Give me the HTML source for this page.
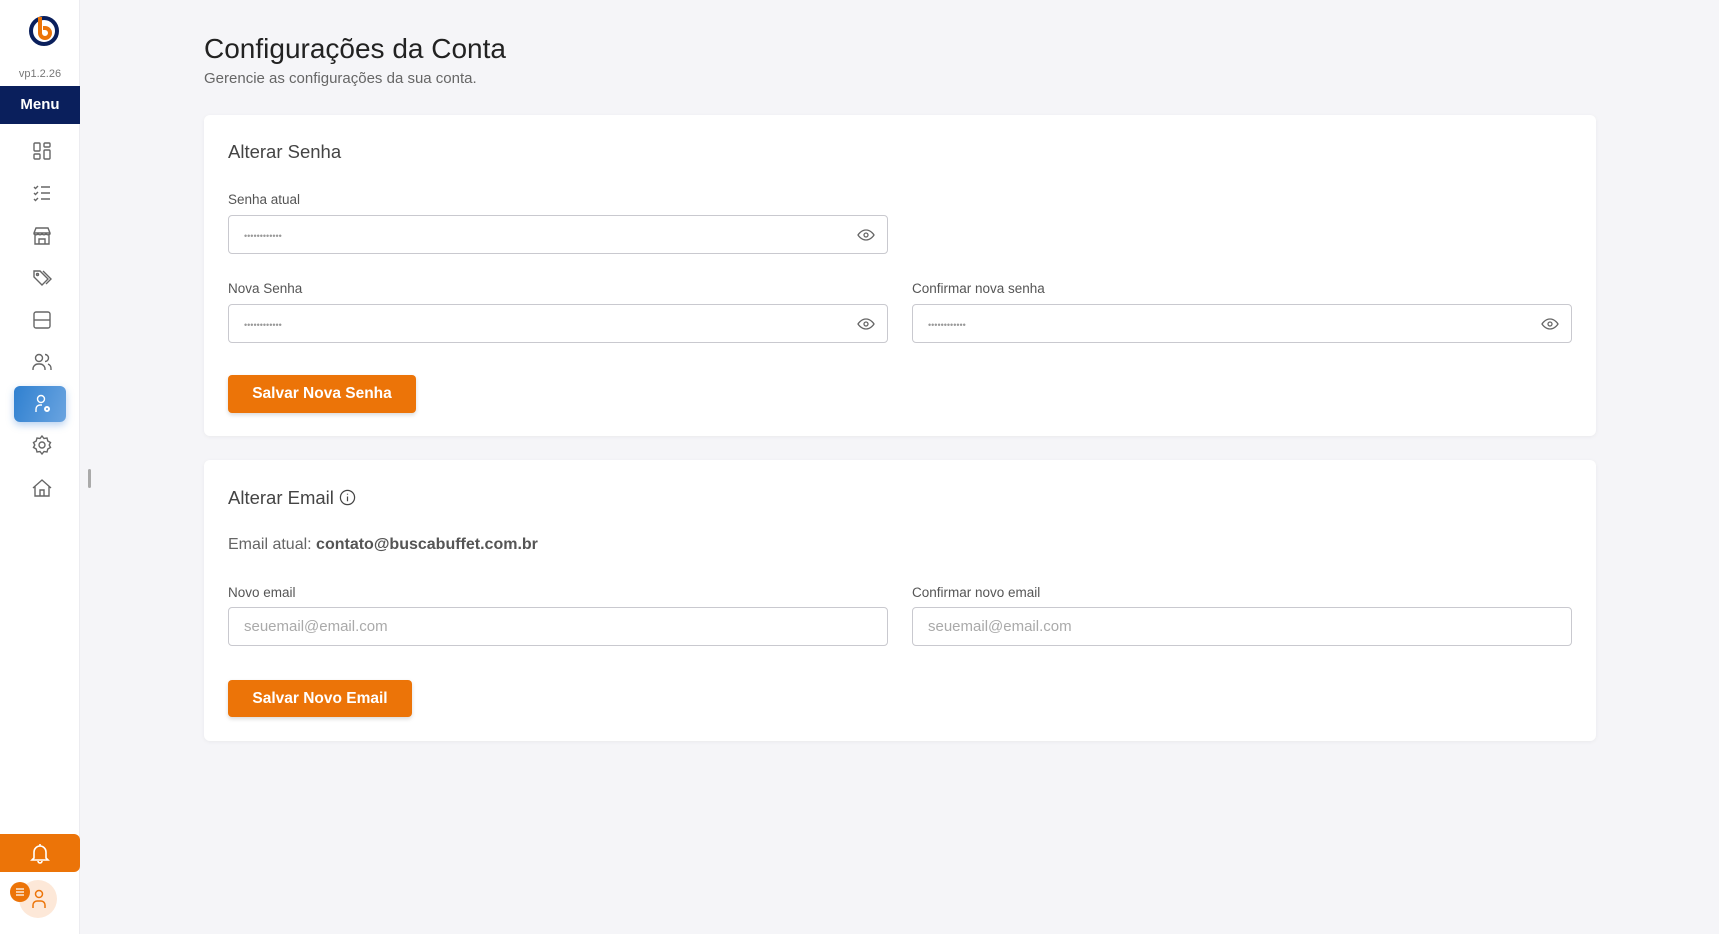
<!DOCTYPE html>
<html><head><meta charset="utf-8"><style>
*{box-sizing:border-box;margin:0;padding:0}
body{width:1719px;height:934px;background:#f5f5f8;font-family:"Liberation Sans",sans-serif;position:relative;overflow:hidden;color:#333}
.sb{position:absolute;left:0;top:0;width:80px;height:934px;background:#fff;border-right:1px solid #ececf0}
.ver{position:absolute;top:68px;width:80px;text-align:center;font-size:11px;color:#777}
.menu{position:absolute;top:86px;left:0;width:80px;height:38px;background:#0a1f5c;color:#fff;font-weight:bold;font-size:15px;text-align:center;line-height:38px}
.ic{position:absolute;left:30px;width:24px;height:24px}
.act{position:absolute;left:14px;top:386px;width:52px;height:36px;border-radius:6px;background:linear-gradient(110deg,#2f80d0,#6aa4e0);box-shadow:0 3px 8px rgba(50,120,210,.35)}
.abs{position:absolute}
.card{position:absolute;left:204px;width:1392px;background:#fff;border-radius:6px;box-shadow:0 1px 4px rgba(0,0,0,.05)}
.h{position:absolute;left:24px;font-size:18.5px;color:#444}
.lbl{position:absolute;font-size:13.5px;color:#555}
.in{position:absolute;height:39px;border:1px solid #c9c9cf;border-radius:4px;background:#fff;font-size:15px;color:#aaa;padding-left:15px;line-height:37px}
.btn{position:absolute;background:#ec7408;color:#fff;font-weight:bold;font-size:15.5px;border-radius:4px;text-align:center;box-shadow:0 2px 4px rgba(0,0,0,.15)}
.eye{position:absolute;right:12px;top:11px}
.dots{font-size:9px;letter-spacing:0;color:#999}
</style></head><body>
<div class="sb">
<svg class="abs" style="left:27px;top:13px" width="34" height="34" viewBox="0 0 34 34"><circle cx="17" cy="18" r="13" fill="none" stroke="#0a1f5c" stroke-width="4"/><path d="M13 4v16a5 5 0 1 0 5-5h-2" fill="none" stroke="#ec7408" stroke-width="4"/></svg>
<div class="ver">vp1.2.26</div>
<div class="menu">Menu</div>
<svg class="ic" style="top:139px" viewBox="0 0 24 24" fill="none" stroke="#666" stroke-width="1.4"><rect x="4" y="4" width="6" height="8" rx="1"/><rect x="14" y="4" width="6" height="4" rx="1"/><rect x="4" y="15" width="6" height="5" rx="1"/><rect x="14" y="11" width="6" height="9" rx="1"/></svg>
<svg class="ic" style="top:181px" viewBox="0 0 24 24" fill="none" stroke="#666" stroke-width="1.4"><path d="M4 6l1.5 1.5L8 5M4 12l1.5 1.5L8 11M4 18l1.5 1.5L8 17M11 6h9M11 12h9M11 18h9"/></svg>
<svg class="ic" style="top:224px" viewBox="0 0 24 24" fill="none" stroke="#666" stroke-width="1.4"><path d="M4 9l2-5h12l2 5v1a3 3 0 0 1-4 0 3 3 0 0 1-4 0 3 3 0 0 1-4 0 3 3 0 0 1-4 0zM5 11v9h14v-9M9 20v-5h6v5M4 9h16"/></svg>
<svg class="ic" style="top:266px" viewBox="0 0 24 24" fill="none" stroke="#666" stroke-width="1.4"><path d="M4 5h6l8 8-6 6-8-8zM13 5l8 8-5 5"/><circle cx="7.5" cy="8.5" r="1"/></svg>
<svg class="ic" style="top:308px" viewBox="0 0 24 24" fill="none" stroke="#666" stroke-width="1.4"><rect x="4" y="4" width="16" height="16" rx="2"/><path d="M4 12h16"/></svg>
<svg class="ic" style="top:350px" viewBox="0 0 24 24" fill="none" stroke="#666" stroke-width="1.4"><circle cx="9" cy="8" r="3.5"/><path d="M3 20v-1a5 5 0 0 1 5-5h2a5 5 0 0 1 5 5v1M15 4.5a3.5 3.5 0 0 1 0 7M18 14a5 5 0 0 1 3 5v1"/></svg>
<div class="act"></div>
<svg class="ic" style="top:392px" viewBox="0 0 24 24" fill="none" stroke="#fff" stroke-width="1.4"><circle cx="11" cy="7" r="3.5"/><path d="M6 20v-3a4 4 0 0 1 4-4h2"/><circle cx="17" cy="17" r="2" stroke-width="2"/></svg>
<svg class="ic" style="top:433px" viewBox="0 0 24 24" fill="none" stroke="#666" stroke-width="1.4"><circle cx="12" cy="12" r="3"/><path d="M12 3l2 2.5 3-.5.8 3 2.7 1.5-1.3 2.5 1.3 2.5-2.7 1.5-.8 3-3-.5L12 21l-2-2.5-3 .5-.8-3L3.5 14.5 4.8 12 3.5 9.5 6.2 8 7 5l3 .5z"/></svg>
<svg class="ic" style="top:476px" viewBox="0 0 24 24" fill="none" stroke="#666" stroke-width="1.4"><path d="M3 12l9-8 9 8M5 10v10h14V10M10 20v-6h4v6"/></svg>
<div class="abs" style="left:0;top:834px;width:80px;height:38px;background:#ec7408;border-radius:0 6px 6px 0"></div>
<svg class="abs" style="left:28px;top:841px" width="24" height="24" viewBox="0 0 24 24" fill="none" stroke="#fff" stroke-width="1.6"><path d="M6 17V11a6 6 0 0 1 12 0v6l2 2H4zM10 20a2 2 0 0 0 4 0M12 3v2"/></svg>
<div class="abs" style="left:19px;top:880px;width:38px;height:38px;border-radius:50%;background:#fde8d8"></div>
<svg class="abs" style="left:29px;top:888px" width="20" height="22" viewBox="0 0 20 22" fill="none" stroke="#ec7408" stroke-width="1.5"><circle cx="10" cy="6" r="3.5"/><path d="M4 20v-3a4 4 0 0 1 4-4h4a4 4 0 0 1 4 4v3"/></svg>
<div class="abs" style="left:10px;top:882px;width:20px;height:20px;border-radius:50%;background:#ec7408"></div>
<svg class="abs" style="left:14px;top:886px" width="12" height="12" viewBox="0 0 12 12" stroke="#fff" stroke-width="1.3"><path d="M2 3h8M2 6h8M2 9h8"/></svg>
</div>
<div class="abs" style="left:88px;top:469px;width:3px;height:19px;background:#aaa;border-radius:2px"></div>
<div class="abs" style="left:204px;top:33px;font-size:28px;color:#222">Configurações da Conta</div>
<div class="abs" style="left:204px;top:70px;font-size:15px;color:#666">Gerencie as configurações da sua conta.</div>
<div class="card" style="top:115px;height:321px">
<div class="h" style="top:26px">Alterar Senha</div>
<div class="lbl" style="left:24px;top:77px">Senha atual</div>
<div class="in" style="left:24px;top:100px;width:660px"><span class="dots">••••••••••••</span><svg class="eye" width="18" height="16" viewBox="0 0 18 16" fill="none" stroke="#666" stroke-width="1.3"><path d="M1 8s3-5 8-5 8 5 8 5-3 5-8 5-8-5-8-5z"/><circle cx="9" cy="8" r="2"/></svg></div>
<div class="lbl" style="left:24px;top:166px">Nova Senha</div>
<div class="in" style="left:24px;top:189px;width:660px"><span class="dots">••••••••••••</span><svg class="eye" width="18" height="16" viewBox="0 0 18 16" fill="none" stroke="#666" stroke-width="1.3"><path d="M1 8s3-5 8-5 8 5 8 5-3 5-8 5-8-5-8-5z"/><circle cx="9" cy="8" r="2"/></svg></div>
<div class="lbl" style="left:708px;top:166px">Confirmar nova senha</div>
<div class="in" style="left:708px;top:189px;width:660px"><span class="dots">••••••••••••</span><svg class="eye" width="18" height="16" viewBox="0 0 18 16" fill="none" stroke="#666" stroke-width="1.3"><path d="M1 8s3-5 8-5 8 5 8 5-3 5-8 5-8-5-8-5z"/><circle cx="9" cy="8" r="2"/></svg></div>
<div class="btn" style="left:24px;top:260px;width:188px;height:38px;line-height:38px">Salvar Nova Senha</div>
</div>
<div class="card" style="top:460px;height:281px">
<div class="h" style="top:27px">Alterar Email <svg style="vertical-align:-2px" width="17" height="17" viewBox="0 0 18 18" fill="none" stroke="#444" stroke-width="1.3"><circle cx="9" cy="9" r="7.5"/><path d="M9 8v5M9 5v1"/></svg></div>
<div class="abs" style="left:24px;top:76px;font-size:16px;color:#666">Email atual: <b style="color:#555">contato@buscabuffet.com.br</b></div>
<div class="lbl" style="left:24px;top:125px">Novo email</div>
<div class="in" style="left:24px;top:147px;width:660px">seuemail@email.com</div>
<div class="lbl" style="left:708px;top:125px">Confirmar novo email</div>
<div class="in" style="left:708px;top:147px;width:660px">seuemail@email.com</div>
<div class="btn" style="left:24px;top:220px;width:184px;height:37px;line-height:37px">Salvar Novo Email</div>
</div>
</body></html>
